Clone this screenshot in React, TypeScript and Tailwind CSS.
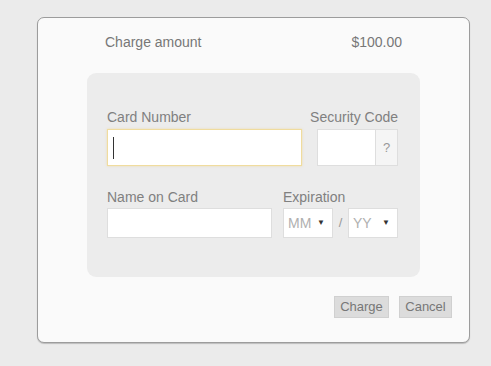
const font = { fontFamily: '"Liberation Sans", Arial, sans-serif' };

const Select = ({ label }: { label: string }) => (
  <div className="flex h-[30px] w-[50px] items-center justify-between border border-[#dedede] bg-white pl-[4px] pr-[7px] text-[14px] text-[#b0b0b0]">
    <span>{label}</span>
    <span className="text-[8px] text-[#333]">▼</span>
  </div>
);

export default function App() {
  return (
    <div className="min-h-[366px] w-full bg-[#ebebeb] pt-[17px]" style={font}>
      <div className="ml-[37px] h-[326px] w-[433px] rounded-[7px] border border-[#9c9c9c] bg-[#fafafa] shadow-[0_1px_1px_rgba(0,0,0,0.2)]">
        {/* Amount */}
        <div className="mt-[14px] flex h-5 items-center justify-between px-[67px] text-[14px] leading-5 text-[#777]">
          <span>Charge amount</span>
          <span>$100.00</span>
        </div>

        {/* Card panel */}
        <div className="ml-[49px] mt-[21px] h-[204px] w-[333px] rounded-[9px] bg-[#ececec] px-[20px] pt-[36px]">
          <div className="flex gap-[15px]">
            <div className="flex flex-col">
              <label className="mb-[4px] text-[14px] leading-4 text-[#808080]">Card Number</label>
              <div className="flex h-[37px] w-[195px] items-center border border-[#f0dc9e] bg-white pl-[5px] shadow-[0_0_2px_rgba(240,210,130,0.6)]">
                <span className="h-[22px] w-px bg-[#333]" />
              </div>
            </div>
            <div className="flex w-[81px] flex-col items-end">
              <label className="mb-[4px] whitespace-nowrap text-[14px] leading-4 text-[#808080]">Security Code</label>
              <div className="flex h-[37px] w-[81px]">
                <div className="w-[59px] border border-[#dedede] bg-white" />
                <div className="flex w-[22px] items-center justify-center border border-l-0 border-[#dedede] bg-[#f5f5f5] text-[13px] text-[#999]">?</div>
              </div>
            </div>
          </div>

          <div className="mt-[23px] flex gap-[11px]">
            <div className="flex flex-col">
              <label className="mb-[3px] text-[14px] leading-4 text-[#808080]">Name on Card</label>
              <div className="h-[30px] w-[165px] border border-[#dedede] bg-white" />
            </div>
            <div className="flex flex-col">
              <label className="mb-[3px] text-[14px] leading-4 text-[#808080]">Expiration</label>
              <div className="flex items-center">
                <Select label="MM" />
                <span className="w-[15px] text-center text-[13px] text-[#999]">/</span>
                <Select label="YY" />
              </div>
            </div>
          </div>
        </div>

        {/* Actions */}
        <div className="mt-[19px] flex justify-end gap-[10px] pr-[17px]">
          <button className="h-[22px] w-[55px] border border-[#d0d0d0] bg-[#dcdcdc] text-[13px] text-[#777]">Charge</button>
          <button className="h-[22px] w-[53px] border border-[#d0d0d0] bg-[#dcdcdc] text-[13px] text-[#777]">Cancel</button>
        </div>
      </div>
    </div>
  );
}
